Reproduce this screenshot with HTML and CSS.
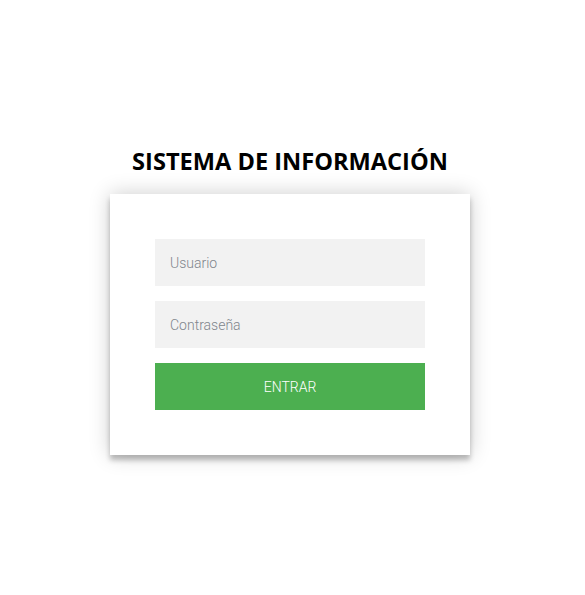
FILE: index.html
```html
<!DOCTYPE html>
<html lang="es">
<head>
<meta charset="utf-8">
<title>Sistema de Información</title>
<link rel="stylesheet" href="styles.css">
</head>
<body>
<main class="page">
  <h1 class="title">SISTEMA DE INFORMACIÓN</h1>
  <form class="card">
    <input class="field" type="text" placeholder="Usuario">
    <input class="field" type="password" placeholder="Contraseña">
    <button class="btn" type="button">ENTRAR</button>
  </form>
</main>
</body>
</html>
```
FILE: styles.css
```css
* { box-sizing: border-box; }
html, body { margin: 0; padding: 0; background: #fff; }
.page {
  display: flex;
  flex-direction: column;
  align-items: center;
  min-height: 100vh;
  padding-top: 141px;
  padding-right: 5px;
}
.title {
  margin: 0 0 13px;
  font-family: "Open Sans", sans-serif;
  font-weight: 700;
  font-size: 23.6px;
  line-height: 40px;
  color: #000;
}
.card {
  width: 360px;
  padding: 45px;
  background: #fff;
  display: flex;
  flex-direction: column;
  gap: 15px;
  box-shadow: 0 0 20px 0 rgba(0,0,0,0.2), 0 5px 5px 0 rgba(0,0,0,0.24);
}
.field {
  width: 100%;
  height: 47px;
  border: 0;
  outline: 0;
  margin: 0;
  padding: 0 15px;
  background: #f2f2f2;
  font-family: Roboto, sans-serif;
  font-weight: 300;
  font-size: 14px;
  color: #333;
}
.field::placeholder { color: #80858c; }
.btn {
  width: 100%;
  height: 47px;
  border: 0;
  margin: 0;
  background: #4caf50;
  color: #fff;
  font-family: Roboto, sans-serif;
  font-weight: 300;
  font-size: 14px;
  text-transform: uppercase;
  cursor: pointer;
}
```
